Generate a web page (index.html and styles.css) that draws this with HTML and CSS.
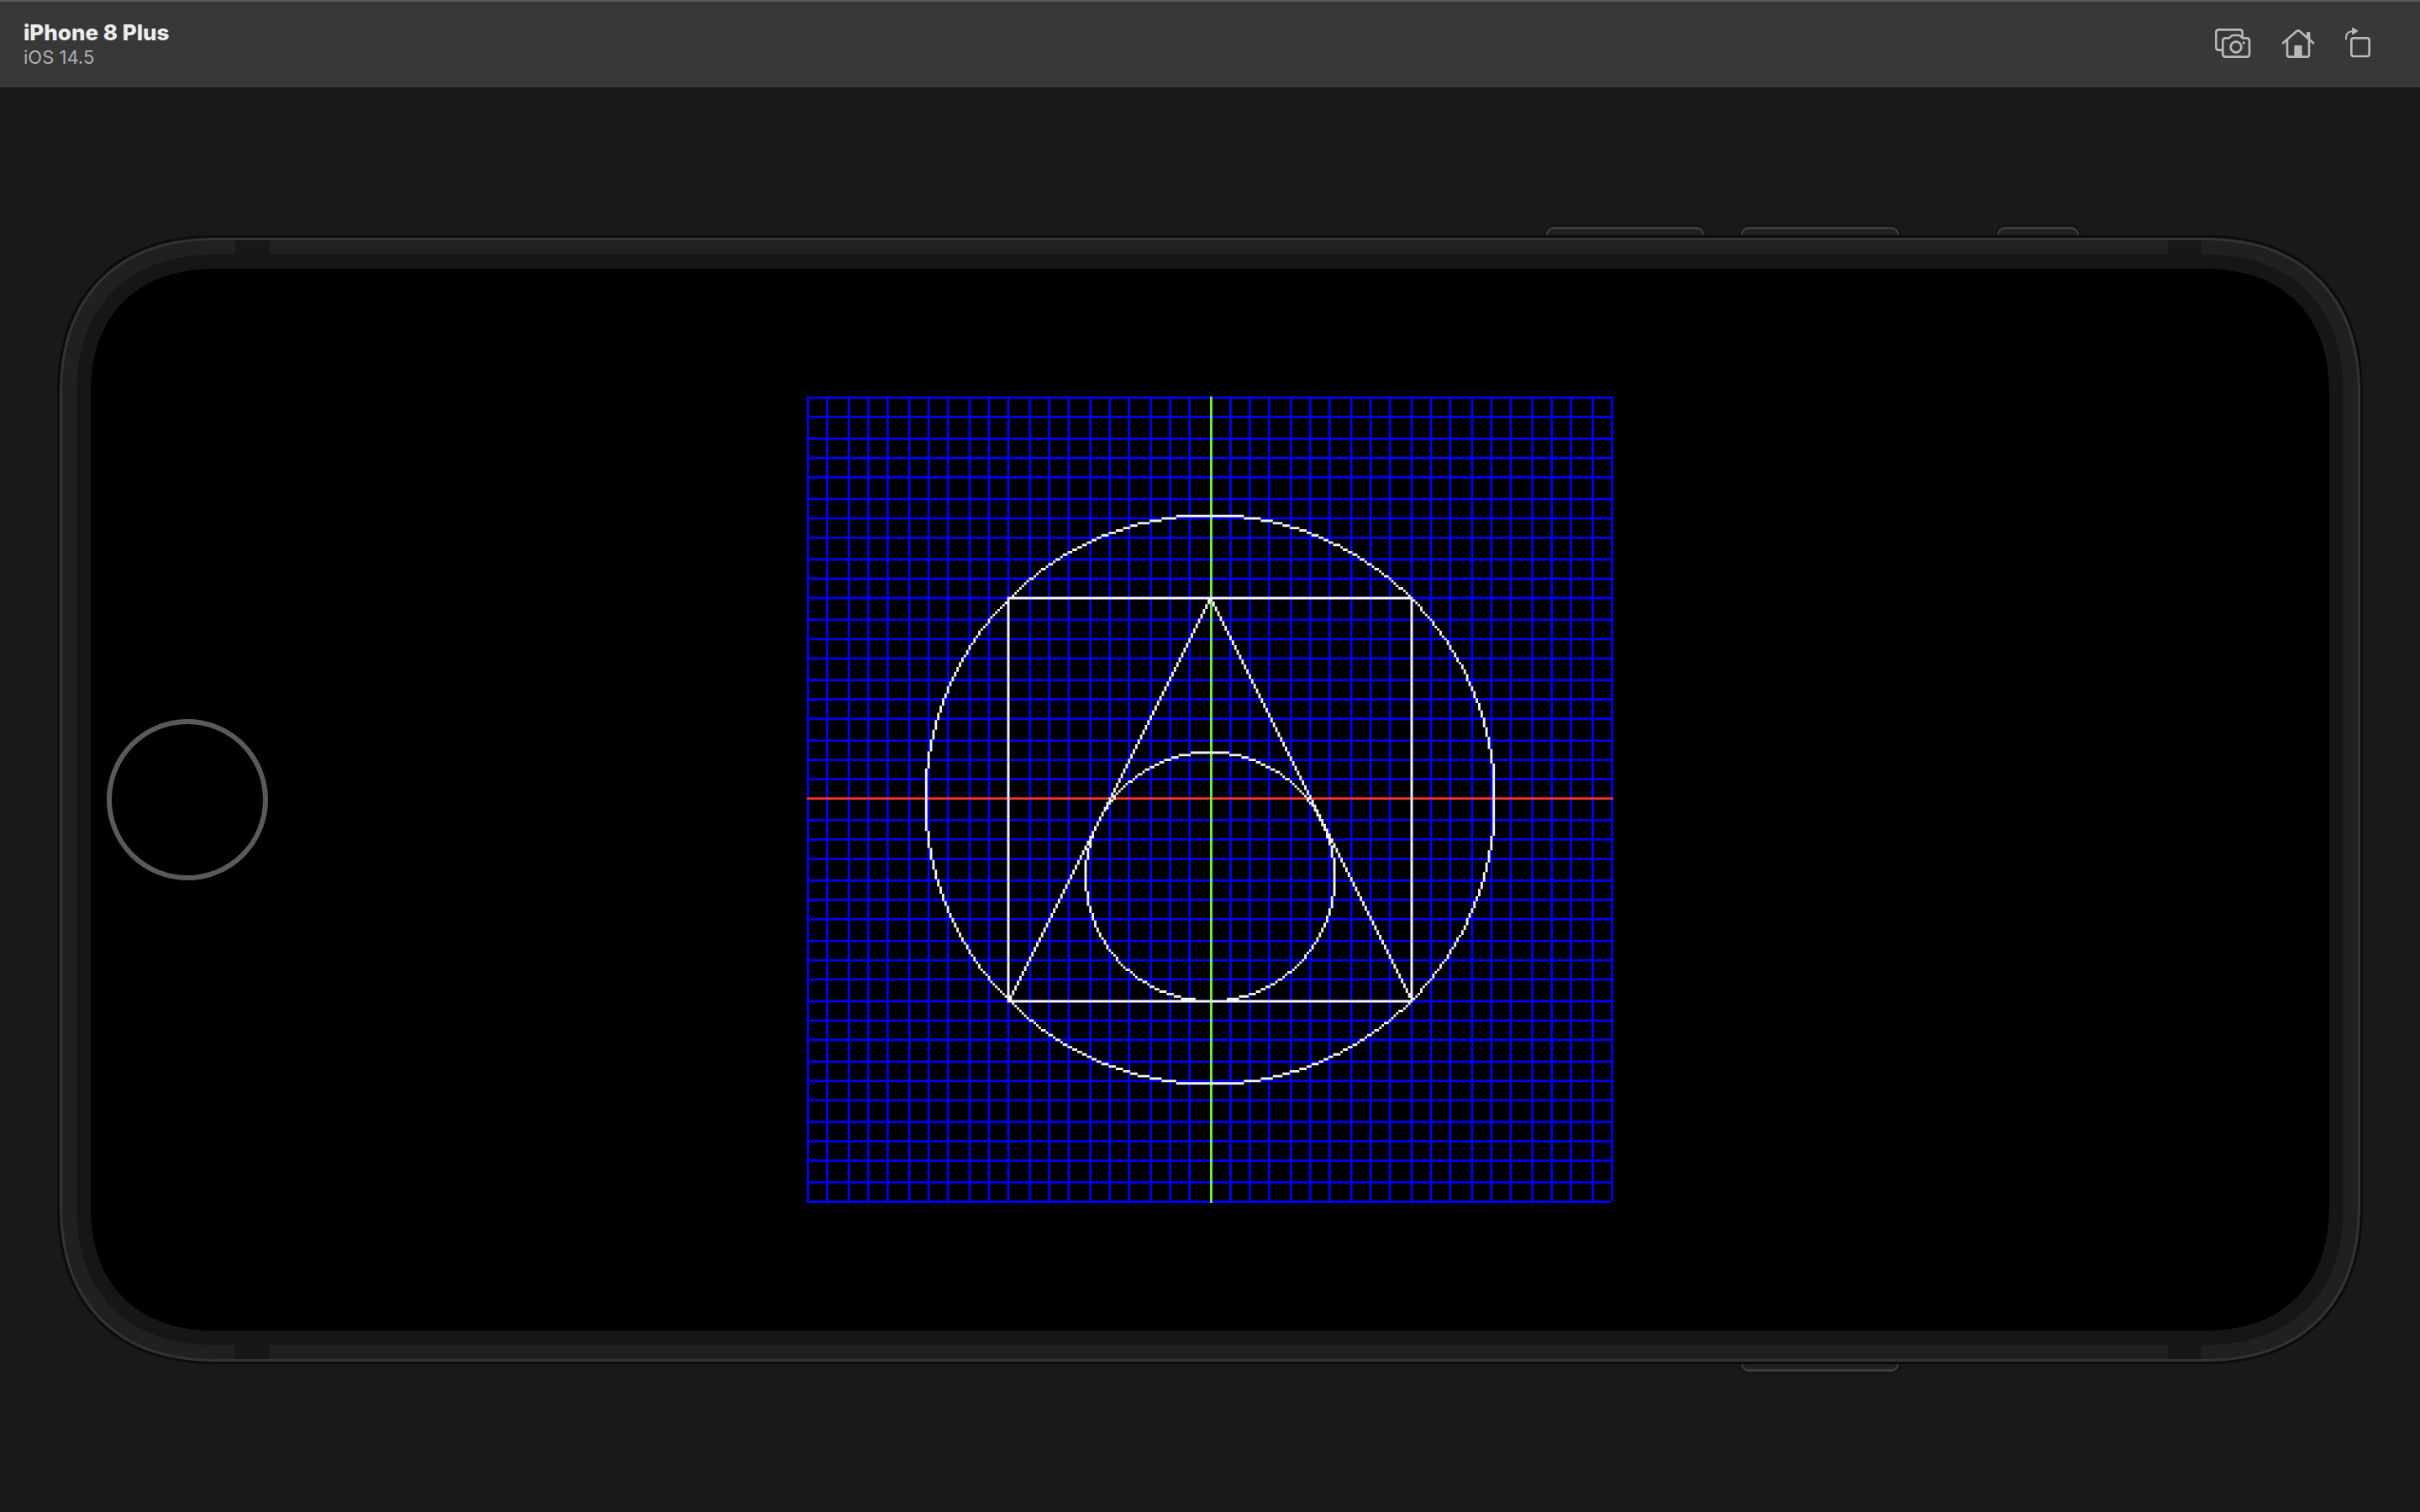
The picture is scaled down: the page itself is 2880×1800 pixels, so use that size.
FILE: index.html
```html
<!DOCTYPE html>
<html lang="en">
<head>
<meta charset="utf-8">
<title>iPhone 8 Plus</title>
<link rel="stylesheet" href="styles.css">
</head>
<body>
<header class="toolbar">
  <div class="heading">
    <h1 class="title">iPhone 8 Plus</h1>
    <p class="subtitle">iOS 14.5</p>
  </div>
  <div class="actions">
    <button class="action" type="button" aria-label="Save screen">
      <svg class="icon" width="44" height="39" viewBox="105 99 132 117">
        <path d="M132 179H122Q112 179 112 169V116Q112 106 122 106H196Q206 106 206 116V131"/>
        <path d="M146 136H156Q160 136 163 132Q167 126 173 126H192Q198 126 202 132Q205 136 209 136H221Q231 136 231 146V193Q231 203 221 203H146Q136 203 136 193V146Q136 136 146 136Z"/>
        <circle cx="183" cy="168" r="19"/>
        <circle class="solid" cx="211" cy="153" r="5"/>
      </svg>
    </button>
    <button class="action" type="button" aria-label="Home">
      <svg class="icon" width="40" height="39" viewBox="345 99 120 117">
        <path d="M351 154L400 111Q405 107 410 111L459 154"/>
        <path d="M366 144V196Q366 203 373 203H437Q444 203 444 196V144"/>
        <path class="solid" d="M391 204V166Q391 162 395 162H415Q419 162 419 166V204ZM435 134V117Q435 114 438 114H445Q448 114 448 117V144Z"/>
      </svg>
    </button>
    <button class="action" type="button" aria-label="Rotate">
      <svg class="icon" width="31" height="39" viewBox="573 99 93 117">
        <rect x="595" y="136" width="64" height="65" rx="8"/>
        <path class="thin" d="M576 142V135Q576 112 600 112"/>
        <path class="solid" d="M597 100Q598 98 601 99L617 109Q619 111 617 113L601 123Q598 124 597 122Z"/>
      </svg>
    </button>
  </div>
</header>
<main class="stage">
  <div class="phone">
    <span class="key key-up"></span>
    <span class="key key-down"></span>
    <span class="key key-mute"></span>
    <span class="key key-power"></span>
    <div class="rim">
      <div class="frame">
        <span class="band band-tl"></span>
        <span class="band band-tr"></span>
        <span class="band band-bl"></span>
        <span class="band band-br"></span>
        <div class="bezel">
          <div class="screen">
            <button class="home" type="button" aria-label="Home button"></button>
            <svg class="plot" viewBox="0 0 334 334" role="img" aria-label="Square, triangle and circles on a grid">
              <path class="grid" id="grid"/>
              <path class="x-axis" d="M0 166h334v1h-334z"/>
              <path class="y-axis" d="M167 0h1v334h-1z"/>
              <path class="shapes" id="shapes"/>
            </svg>
          </div>
        </div>
      </div>
    </div>
  </div>
</main>
<script src="plot.js"></script>
</body>
</html>
```
FILE: styles.css
```css
* { box-sizing: border-box; }

body {
  margin: 0;
  min-height: 100vh;
  background: #191919;
  font-family: Inter, "Liberation Sans", sans-serif;
}

.toolbar {
  display: flex;
  align-items: center;
  justify-content: space-between;
  height: 104px;
  padding: 0 58px 0 28px;
  border-top: 2px solid #5c5c5c;
  background: #383838;
}

.heading { padding-bottom: 2px; }
.title,
.subtitle { margin: 0; }
.title {
  font-size: 26px;
  line-height: 32px;
  font-weight: 800;
  color: #ececec;
}
.subtitle {
  font-size: 22px;
  line-height: 26px;
  color: #b0b0b0;
}

.actions {
  display: flex;
  gap: 36px;
  padding-bottom: 2px;
}
.action {
  padding: 0;
  border: 0;
  background: none;
}
.icon {
  display: block;
  fill: none;
  stroke: #b8b8b8;
  stroke-width: 8;
  stroke-linecap: round;
}
.icon .thin { stroke-width: 6; stroke-linecap: butt; }
.icon .solid { fill: #b8b8b8; stroke: none; }

.stage { padding: 176px 68px; }

.phone {
  position: relative;
  z-index: 0;
}
.rim {
  border-radius: 175px;
  padding: 3px;
  background: #0c0c0c;
}
.frame {
  position: relative;
  border: 3px solid #333;
  border-radius: 172px;
  padding: 17px;
  background: #202020;
}
.bezel {
  padding: 17px;
  border-radius: 152px;
  background: #161616;
}
.screen {
  position: relative;
  display: flex;
  align-items: center;
  justify-content: center;
  aspect-ratio: 2664 / 1264;
  border-radius: 135px;
  background: #000;
}

/* continuous-curvature corners where the browser can draw them */
@supports (corner-shape: superellipse(1.2)) {
  .rim,
  .frame,
  .bezel,
  .screen { corner-shape: superellipse(1.2); }
  .rim { border-radius: 190px; }
  .frame { border-radius: 187px; }
  .bezel { border-radius: 167px; }
  .screen { border-radius: 150px; }
}

/* antenna bands */
.band {
  position: absolute;
  width: 40px;
  height: 17px;
  background: #171717;
}
.band-tl { top: 0; left: 206px; }
.band-tr { top: 0; right: 186px; }
.band-bl { bottom: 0; left: 206px; }
.band-br { bottom: 0; right: 186px; }

/* hardware keys sit behind the rim */
.key {
  position: absolute;
  z-index: -1;
  top: -10px;
  width: 188px;
  height: 24px;
  border: 2px solid #3c3c3c;
  border-top-width: 3px;
  border-radius: 9px;
  background: #202020;
  box-shadow: 0 0 0 2px #131313;
}
.key-up { right: 784px; }
.key-down { right: 552px; }
.key-mute { right: 338px; width: 97px; }
.key-power {
  top: auto;
  right: 552px;
  bottom: -9px;
  border-top-width: 2px;
  border-bottom-width: 3px;
}

.home {
  position: absolute;
  left: 19px;
  width: 192px;
  height: 192px;
  padding: 0;
  border: 6px solid #5a5a5a;
  border-radius: 50%;
  background: none;
}

.plot {
  width: 960px;
  max-width: 100%;
}
.grid { fill: #0000f0; }
.x-axis { fill: #f03424; }
.y-axis { fill: #70ee48; }
.shapes { fill: #f4f4f4; }
```
FILE: plot.js
```js
const LAST = 333;
const CELLS = 40;
const lit = new Set();

function dot(x, y) {
  lit.add(y * 1000 + x);
}

function line(x0, y0, x1, y1) {
  const steps = Math.max(Math.abs(x1 - x0), Math.abs(y1 - y0));
  for (let i = 0; i <= steps; i++) {
    dot(Math.round(x0 + (x1 - x0) * i / steps), Math.round(y0 + (y1 - y0) * i / steps));
  }
}

function circle(cx, cy, r) {
  const reach = r * Math.SQRT1_2;
  for (let x = Math.floor(cx - reach); x <= Math.ceil(cx + reach); x++) {
    const h = Math.sqrt(r * r - (x - cx) ** 2);
    dot(x, Math.round(cy - h));
    dot(x, Math.round(cy + h));
  }
  for (let y = Math.ceil(cy - reach); y <= cy + reach; y++) {
    const w = Math.sqrt(r * r - (y - cy) ** 2);
    dot(Math.round(cx - w), y);
    dot(Math.round(cx + w), y);
  }
}

// grid: cells are rounded up to the centre and truncated past it
let grid = '';
for (let k = 0; k <= CELLS; k++) {
  const at = k * 25 / 3;
  const col = k <= CELLS / 2 ? Math.round(at) : Math.floor(at + 0.001);
  const row = k === CELLS / 2 ? 166 : col;
  grid += `M${col} 0h1v${LAST}h-1z`;
  grid += `M0 ${row}v1h${LAST}v-1z`;
}
document.getElementById('grid').setAttribute('d', grid.replace(/M0 (\d+)v1h(\d+)v-1z/g, 'M0 $1h$2v1h-$2z'));

line(83, 83, 250, 83);
line(250, 83, 250, 250);
line(250, 250, 83, 250);
line(83, 250, 83, 83);
line(166, 84, 83, 250);
line(167, 84, 250, 250);
circle(166.6, 166.5, 117.8);
circle(166.6, 198.4, 51.5);

let shapes = '';
for (const key of lit) {
  shapes += `M${key % 1000} ${Math.floor(key / 1000)}h1v1h-1z`;
}
document.getElementById('shapes').setAttribute('d', shapes);
```
